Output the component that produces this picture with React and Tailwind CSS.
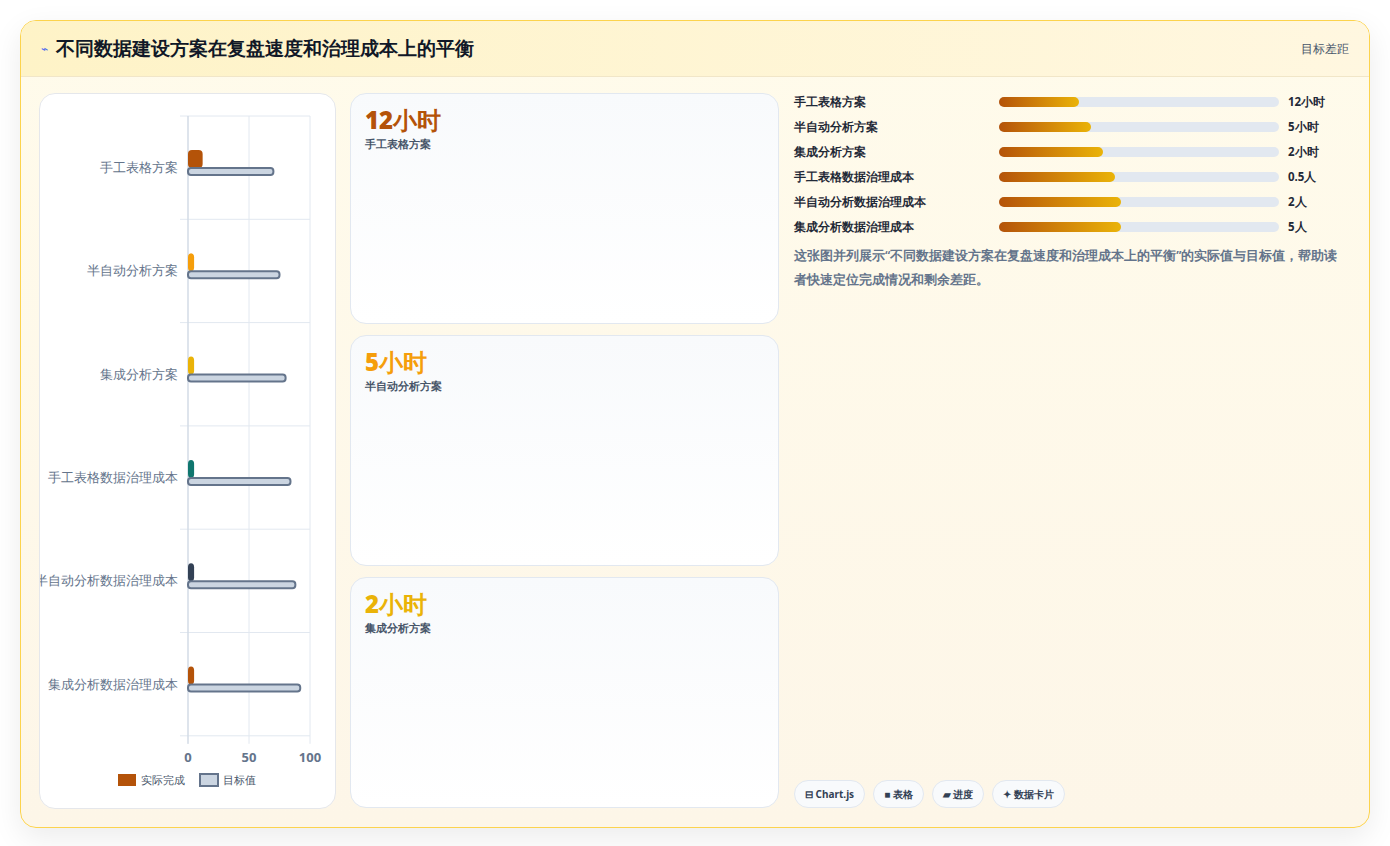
const rows = [
  { name: '手工表格方案', actual: 12, target: 70, color: '#b45309', value: '12小时', fill: 80 },
  { name: '半自动分析方案', actual: 5, target: 75, color: '#f59e0b', value: '5小时', fill: 92 },
  { name: '集成分析方案', actual: 5, target: 80, color: '#eab308', value: '2小时', fill: 104 },
  { name: '手工表格数据治理成本', actual: 5, target: 84, color: '#0f766e', value: '0.5人', fill: 116 },
  { name: '半自动分析数据治理成本', actual: 5, target: 88, color: '#334155', value: '2人', fill: 122 },
  { name: '集成分析数据治理成本', actual: 5, target: 92, color: '#b45309', value: '5人', fill: 122 },
]

const cards = [
  { value: '12小时', label: '手工表格方案', color: 'text-[#b45309]' },
  { value: '5小时', label: '半自动分析方案', color: 'text-[#f59e0b]' },
  { value: '2小时', label: '集成分析方案', color: 'text-[#eab308]' },
]

function Chart() {
  const x0 = 148, w = 122, top = 22, rowH = 103.3
  return (
    <svg width="296" height="716" className="block">
      {[0, 50, 100].map((v) => (
        <line key={v} x1={x0 + (v * w) / 100} x2={x0 + (v * w) / 100} y1={top} y2={top + rowH * 6 + 8} stroke="#e2e8f0" />
      ))}
      {rows.map((r, i) => (
        <line key={'h' + i} x1={x0 - 8} x2={x0 + w} y1={top + rowH * i} y2={top + rowH * i} stroke="#e2e8f0" />
      ))}
      <line x1={x0 - 8} x2={x0 + w} y1={top + rowH * 6} y2={top + rowH * 6} stroke="#e2e8f0" />
      <line x1={x0} x2={x0} y1={top} y2={top + rowH * 6 + 8} stroke="#cbd5e1" />
      {rows.map((r, i) => {
        const cy = top + rowH * i + 52
        return (
          <g key={r.name}>
            <text x={x0 - 10} y={cy + 4} textAnchor="end" fontSize="12.5" fill="#64748b">{r.name}</text>
            <rect x={x0} y={cy - 18} width={Math.max((r.actual * w) / 100, 6)} height={18} rx="4" fill={r.color} />
            <rect x={x0} y={cy} width={(r.target * w) / 100} height={7} rx="3" fill="#cbd5e1" stroke="#64748b" strokeWidth="2" />
          </g>
        )
      })}
      {[0, 50, 100].map((v) => (
        <text key={'t' + v} x={x0 + (v * w) / 100} y={top + rowH * 6 + 26} textAnchor="middle" fontSize="13" fontWeight="bold" fill="#64748b">{v}</text>
      ))}
      <rect x="78" y="680" width="18" height="12" fill="#b45309" />
      <text x="101" y="690" fontSize="11" fill="#475569">实际完成</text>
      <rect x="160" y="680" width="18" height="12" fill="#cbd5e1" stroke="#64748b" strokeWidth="2" />
      <text x="183" y="690" fontSize="11" fill="#475569">目标值</text>
    </svg>
  )
}

export default function App() {
  return (
    <div className="w-[1390px] h-[846px] bg-white p-5 font-['Noto_Sans_CJK_SC','Noto_Sans',sans-serif]">
      <div className="h-[808px] rounded-2xl border border-[#fcd34d] bg-gradient-to-b from-[#fffbeb] to-[#fdf6e8] shadow-[0_10px_30px_rgba(0,0,0,0.08)] overflow-hidden flex flex-col">
        <div className="h-[56px] flex items-center justify-between px-5 bg-gradient-to-r from-[#fef3c7] to-[#fff7e0] border-b border-[#f1e6c8]">
          <div className="flex items-center gap-2">
            <span className="text-[#4f6bed] text-xs">⌁</span>
            <h1 className="text-[19px] font-black text-[#111827]">不同数据建设方案在复盘速度和治理成本上的平衡</h1>
          </div>
          <span className="text-xs text-[#475569]">目标差距</span>
        </div>
        <div className="flex-1 flex gap-[14px] p-[18px] pt-4">
          <div className="w-[297px] h-[716px] rounded-2xl bg-white border border-[#e5e7eb] overflow-hidden">
            <Chart />
          </div>
          <div className="w-[429px] flex flex-col gap-[11px]">
            {cards.map((c) => (
              <div key={c.label} className="h-[231px] rounded-2xl border border-[#e2e8f0] bg-gradient-to-b from-[#f8fafc] to-white px-[14px] py-[10px]">
                <div className={`text-2xl font-black leading-8 ${c.color}`}>{c.value}</div>
                <div className="text-[11px] font-semibold text-[#475569]">{c.label}</div>
              </div>
            ))}
          </div>
          <div className="flex-1 flex flex-col pl-[1px]">
            <div className="flex flex-col gap-[7px]">
              {rows.map((r) => (
                <div key={r.name} className="flex items-center h-[18px]">
                  <span className="w-[205px] text-[11.5px] font-bold text-[#1f2937]">{r.name}</span>
                  <div className="w-[280px] h-[10px] rounded-full bg-[#e2e8f0]">
                    <div className="h-full rounded-full bg-gradient-to-r from-[#b45309] to-[#eab308]" style={{ width: r.fill }} />
                  </div>
                  <span className="ml-[9px] text-[11.5px] font-bold text-[#1f2937]">{r.value}</span>
                </div>
              ))}
            </div>
            <p className="mt-[8px] text-[12.5px] leading-6 font-semibold text-[#64748b] w-[545px]">
              这张图并列展示“不同数据建设方案在复盘速度和治理成本上的平衡”的实际值与目标值，帮助读者快速定位完成情况和剩余差距。
            </p>
            <div className="mt-auto flex gap-2 pb-[1px]">
              {['⊟ Chart.js', '■ 表格', '▰ 进度', '✦ 数据卡片'].map((t) => (
                <span key={t} className="h-7 px-[10px] flex items-center rounded-full border border-[#e2e8f0] bg-[#f8fafc] text-[10px] font-bold text-[#334155]">{t}</span>
              ))}
            </div>
          </div>
        </div>
      </div>
    </div>
  )
}
